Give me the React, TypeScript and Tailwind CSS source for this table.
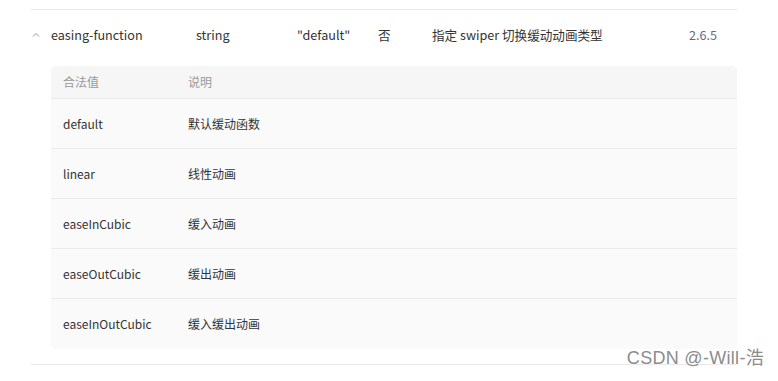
import { Fragment } from 'react'

const rows = [
  { value: 'default', desc: '默认缓动函数' },
  { value: 'linear', desc: '线性动画' },
  { value: 'easeInCubic', desc: '缓入动画' },
  { value: 'easeOutCubic', desc: '缓出动画' },
  { value: 'easeInOutCubic', desc: '缓入缓出动画' },
]

export default function App() {
  return (
    <div
      className="w-[778px] h-[381px] bg-white relative overflow-hidden text-[#333]"
      style={{ fontFamily: '"Noto Sans CJK SC", "Noto Sans", sans-serif' }}
    >
      <div className="pt-[9px] pl-[31px]">
        <div className="w-[706px] border-t border-b border-[#e8e8e8] pb-[15px]">
          {/* property row */}
          <div className="flex items-center h-[50px] text-[12.6px]">
            <span className="w-[20px] flex pl-[1px]">
              <svg width="8" height="6" viewBox="0 0 8 6" fill="none">
                <polyline points="1,4.5 4,1.5 7,4.5" stroke="#999" strokeWidth="1" />
              </svg>
            </span>
            <span className="w-[145px]">easing-function</span>
            <span className="w-[101px]">string</span>
            <span className="w-[81px]">"default"</span>
            <span className="w-[54px]">否</span>
            <span className="w-[257px]">指定 swiper 切换缓动动画类型</span>
            <span className="text-[#5f6b8a]">2.6.5</span>
          </div>

          {/* enum values table */}
          <div className="ml-[20px] mt-[6px] rounded-[5px] overflow-hidden bg-[#fafafa] text-[12px]">
            <div className="flex items-center h-[33px] bg-[#f6f6f6] text-[#999] border-b border-[#ebebeb]">
              <span className="w-[137px] pl-[12px]">合法值</span>
              <span>说明</span>
            </div>
            {rows.map((r, i) => (
              <Fragment key={r.value}>
                <div
                  className={`flex items-center h-[50px] ${i < rows.length - 1 ? 'border-b border-[#ebebeb]' : ''}`}
                >
                  <span className="w-[137px] pl-[12px]">{r.value}</span>
                  <span>{r.desc}</span>
                </div>
              </Fragment>
            ))}
          </div>
        </div>
      </div>

      {/* watermark */}
      <div
        className="absolute right-[14px] top-[345px] text-[18px] text-[#8c8c8c] tracking-[0.3px]"
        style={{ fontFamily: '"Liberation Sans", "Noto Sans CJK SC", sans-serif', textShadow: '0 0 2px #fff, 0 0 2px #fff' }}
      >
        CSDN @-Will-浩
      </div>
    </div>
  )
}
